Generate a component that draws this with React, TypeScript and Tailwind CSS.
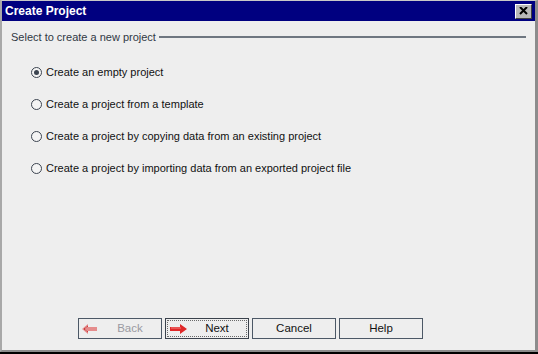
import React from "react";

const options = [
  "Create an empty project",
  "Create a project from a template",
  "Create a project by copying data from an existing project",
  "Create a project by importing data from an exported project file",
];

function Radio({ checked }: { checked: boolean }) {
  return (
    <span className="flex h-[11px] w-[11px] items-center justify-center rounded-full border border-[#3c4450] bg-[#f4f4f4]">
      {checked ? <span className="h-[5px] w-[5px] rounded-full bg-[#3c4450]" /> : null}
    </span>
  );
}

function ArrowLeft() {
  return (
    <svg width="16" height="10" viewBox="0 0 16 10">
      <path d="M0 5 L6 0 L6 3 L15 3 L15 7 L6 7 L6 10 Z" fill="#e26c6c" opacity="0.75" />
      <path d="M2 5 L6 2 M2 5 L6 8" stroke="#c02020" strokeWidth="1" strokeDasharray="1 1" />
    </svg>
  );
}

function ArrowRight() {
  return (
    <svg width="18" height="10" viewBox="0 0 18 10">
      <path d="M0 3 L10 3 L10 0 L17 5 L10 10 L10 7 L0 7 Z" fill="#e02828" />
      <path d="M1 4 L11 4" stroke="#f28080" strokeWidth="1" />
    </svg>
  );
}

function Button({
  label,
  icon,
  disabled,
  focused,
}: {
  label: string;
  icon?: React.ReactNode;
  disabled?: boolean;
  focused?: boolean;
}) {
  return (
    <div
      className={
        "flex h-[21px] w-[84px] items-center border bg-[#eeeeee] " +
        (focused ? "border-[#3a424c] p-[1px]" : "border-[#4c5866]")
      }
    >
      <div
        className={
          "flex h-full w-full items-center " +
          (focused ? "border border-dotted border-[#6a6a6a]" : "")
        }
      >
        {icon ? <div className="flex w-[20px] justify-center pl-[2px]">{icon}</div> : null}
        <span
          className={
            "flex-1 text-center text-[11.5px] " + (disabled ? "text-[#9a9aa2]" : "text-[#111111]")
          }
        >
          {label}
        </span>
      </div>
    </div>
  );
}

export default function App() {
  return (
    <div className="h-[354px] w-[538px] bg-black font-['Liberation_Sans',Arial,sans-serif]">
      <div className="flex h-[352px] flex-col border-b-[2px] border-l-[2px] border-r-[3px] border-t border-b-[#8c8c8c] border-l-[#a8a8a8] border-r-[#8c8c8c] border-t-[#c8c8c8]">
        <div className="flex h-[20px] items-center justify-between bg-[#000080] pl-[3px] pr-[3px]">
          <span className="text-[12px] font-bold leading-none text-white">Create Project</span>
          <div className="flex h-[15px] w-[17px] items-center justify-center border border-b-[#404040] border-l-white border-r-[#404040] border-t-white bg-[#b8b8b8]">
            <svg width="9" height="8" viewBox="0 0 9 8">
              <path d="M1 0 L8 7 M8 0 L1 7" stroke="#000" strokeWidth="2" />
            </svg>
          </div>
        </div>
        <div className="flex flex-1 flex-col bg-[#eeeeee]">
          <div className="flex h-[14px] items-center pl-[9px] pr-[9px] mt-[9px]">
            <span className="text-[11px] leading-none text-[#303844]">Select to create a new project</span>
            <div className="ml-[3px] h-[2px] flex-1 bg-[#6e7680]" />
          </div>
          <div className="flex flex-col gap-[20px] pl-[29px] pt-[22px]">
            {options.map((o, i) => (
              <div key={o} className="flex h-[12px] items-center gap-[4px]">
                <Radio checked={i === 0} />
                <span className="text-[11px] leading-none text-[#111111]">{o}</span>
              </div>
            ))}
          </div>
          <div className="flex-1" />
          <div className="flex gap-[3px] pb-[11px] pl-[76px]">
            <Button label="Back" icon={<ArrowLeft />} disabled />
            <Button label="Next" icon={<ArrowRight />} focused />
            <Button label="Cancel" />
            <Button label="Help" />
          </div>
        </div>
      </div>
    </div>
  );
}
